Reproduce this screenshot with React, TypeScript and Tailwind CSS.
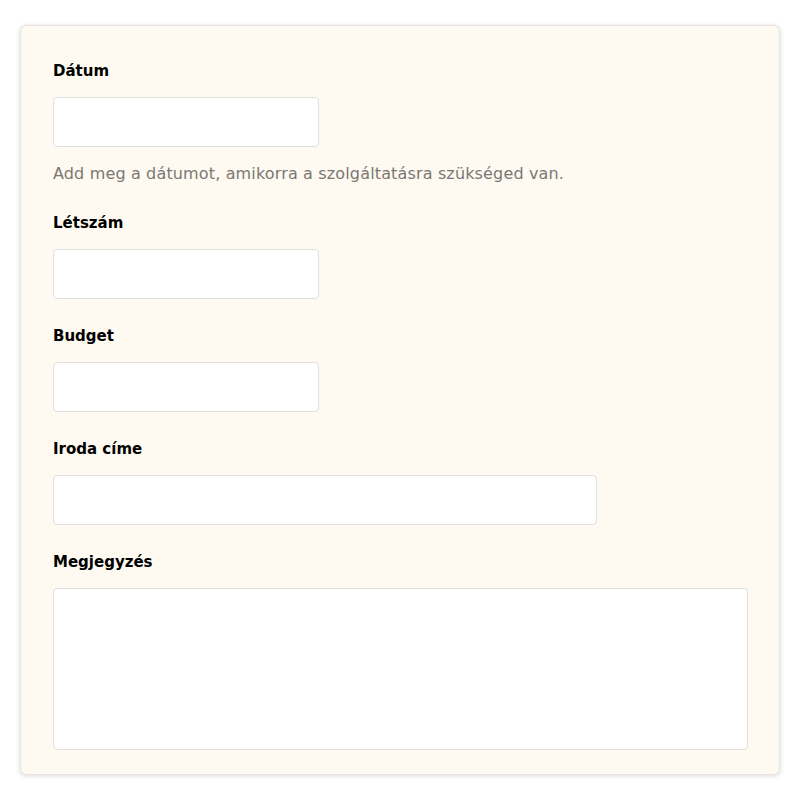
export default function App() {
  const label = "block text-[15px] leading-6 font-bold text-black mb-[14px]";
  const input = "block h-[50px] bg-white border border-[#e2e0dc] rounded-[4px]";
  return (
    <div className="w-[800px] h-[800px] bg-white pt-[25px] px-[20px]" style={{ fontFamily: "'DejaVu Sans', 'Noto Sans', sans-serif" }}>
      <div className="w-[760px] bg-[#fefaf1] rounded-[6px] border border-[#e6e4e0] shadow-[0_1px_5px_rgba(0,0,0,0.15)] px-[32px] pt-[33px] pb-[24px]">
        <div>
          <label className={label}>Dátum</label>
          <div className={`${input} w-[266px]`} />
          <p className="mt-[15px] text-[16px] tracking-[0.15px] leading-6 text-[#7a7774]">Add meg a dátumot, amikorra a szolgáltatásra szükséged van.</p>
        </div>
        <div className="mt-[25px]">
          <label className={label}>Létszám</label>
          <div className={`${input} w-[266px]`} />
        </div>
        <div className="mt-[25px]">
          <label className={label}>Budget</label>
          <div className={`${input} w-[266px]`} />
        </div>
        <div className="mt-[25px]">
          <label className={label}>Iroda címe</label>
          <div className={`${input} w-[544px]`} />
        </div>
        <div className="mt-[25px]">
          <label className={label}>Megjegyzés</label>
          <div className="block h-[162px] w-[695px] bg-white border border-[#e2e0dc] rounded-[4px]" />
        </div>
      </div>
    </div>
  );
}
